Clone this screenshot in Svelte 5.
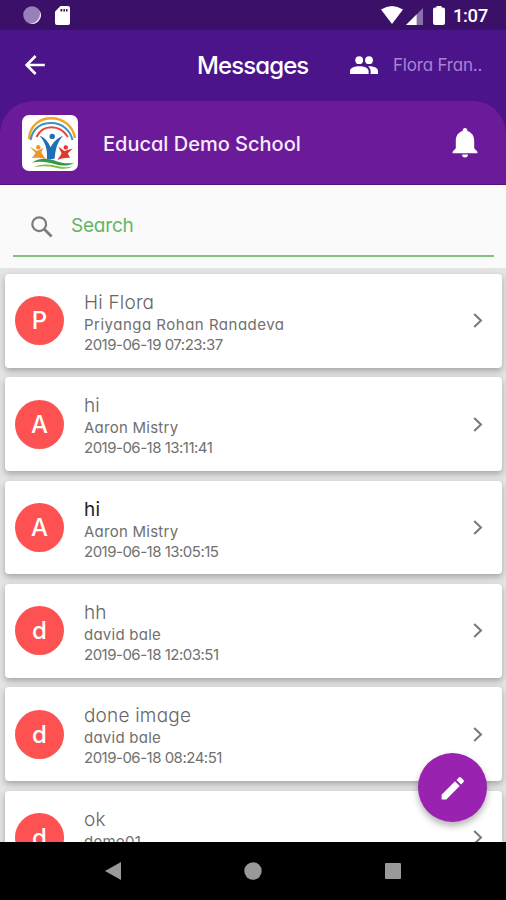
<script>
  const messages = [
    { initial: 'P', title: 'Hi Flora', sender: 'Priyanga Rohan Ranadeva', stamp: '2019-06-19 07:23:37' },
    { initial: 'A', title: 'hi', sender: 'Aaron Mistry', stamp: '2019-06-18 13:11:41' },
    { initial: 'A', title: 'hi', sender: 'Aaron Mistry', stamp: '2019-06-18 13:05:15', unread: true },
    { initial: 'd', title: 'hh', sender: 'david bale', stamp: '2019-06-18 12:03:51' },
    { initial: 'd', title: 'done image', sender: 'david bale', stamp: '2019-06-18 08:24:51' },
    { initial: 'd', title: 'ok', sender: 'demo01', stamp: '' }
  ];
</script>

<div class="screen">
  <div class="status">
    <svg class="dot" width="18" height="18" viewBox="0 0 18 18">
      <circle cx="9" cy="9" r="8.8" fill="#9a7fb8" />
      <path d="M16.2 4.2A8.6 8.6 0 0 1 6 17.2 9.5 9.5 0 0 0 16.2 4.2Z" fill="#eee6f6" />
    </svg>
    <svg class="sd" width="15" height="19" viewBox="0 0 15 19">
      <path d="M5.5 0H13q2 0 2 2v15q0 2-2 2H2q-2 0-2-2V5.5Z" fill="#fff" />
      <path d="M5.5 3h1.8v2.5H5.5zM8.4 3H10v2.5H8.4zM11 3h1.5v2.5H11z" fill="#3b1068" />
    </svg>
    <span class="grow"></span>
    <svg width="22" height="18" viewBox="0 0 22 18">
      <path d="M0 3.6Q11-3.4 22 3.6L11 18Z" fill="#fff" />
    </svg>
    <svg class="cell" width="17" height="17" viewBox="0 0 17 17">
      <path d="M0 17 17 0V17Z" fill="#8a70aa" />
      <path d="M0 17 10.6 6.4V17Z" fill="#fff" />
    </svg>
    <svg class="battery" width="12" height="19" viewBox="0 0 12 19">
      <path d="M3.5 0h5v1.5H10q2 0 2 2V17q0 2-2 2H2q-2 0-2-2V3.5q0-2 2-2h1.5Z" fill="#fff" />
    </svg>
    <span class="clock">1:07</span>
  </div>

  <header>
    <svg class="back" width="20" height="20" viewBox="0 0 20 20" fill="none" stroke="#fff" stroke-width="2.6">
      <path d="M19.8 10H2M10.6 1 1.7 10l8.9 9" />
    </svg>
    <h1>Messages</h1>
    <svg class="people" width="28" height="18" viewBox="0 0 28 18" fill="#fff">
      <circle cx="9.2" cy="4.2" r="3.9" />
      <circle cx="19" cy="4.2" r="3.9" />
      <path d="M0 18v-3.2c0-3.2 5.6-4.6 9.4-4.6s9.2 1.4 9.2 4.6V18ZM20.6 18v-3.2c0-1.9-1-3.3-2.4-4.4 4.2-.3 9.8 1.2 9.8 4.4V18Z" />
    </svg>
    <span class="user">Flora Fran..</span>
  </header>

  <div class="banner-wrap">
    <div class="banner">
      <svg class="logo" width="56" height="56" viewBox="0 0 56 56">
        <rect width="56" height="56" rx="7" fill="#fff" />
        <g fill="none" stroke-width="2">
          <path d="M7 24C8 10 18 3.2 29.5 3.2S51 11 53 23" stroke="#efa52d" stroke-width="2.5" />
          <path d="M8.5 25C11 13 19 8 29.5 8S48 15 50.5 25" stroke="#3c91c5" />
          <path d="M14.5 22C18 14.5 23 12.3 29.5 12.3S42 16 46 22" stroke="#e5493b" />
        </g>
        <g fill="#1d70b5">
          <circle cx="30.2" cy="21.4" r="2.7" />
          <path d="M17.5 20.8c5.2 1.8 9.2 6.5 11.1 11.5C30.8 28 35 22.8 41 21c-5.2 5.3-7.5 12-8.3 22.5-3 1-6 1-7.8.2.8-9.2-1.8-17-7.4-22.9Z" />
        </g>
        <g fill="#f09525">
          <circle cx="16.3" cy="32.3" r="2.2" />
          <path d="M7.5 31.5l7.4 4.5 6.4-3-2 4.5 4.5 6.7c-5-1.2-9.3-1.8-14-1l3.8-5.2Z" />
        </g>
        <g fill="#df3831">
          <circle cx="43.8" cy="32.4" r="2.2" />
          <path d="M36.3 31.5l6 4.5 8.7-2.5-5.2 4.8 2.2 4.4c-4.6-.2-8.6.7-12.6 2.2l4.2-6.5Z" />
        </g>
        <path d="M10.2 47.8c9-6.2 17-3.8 25-1.4 6 1.8 11 2.4 16.7 1.5-6 3.8-12.5 2.8-19.4 1-7.7-2-14-3.2-22.3-1.1Z" fill="#31994a" />
        <path d="M12 52c9-4.2 18-2.4 24.4-.7 5.3 1.4 9.5 1 14.3.2-6 3.3-12.2 2.2-18 .9-6.4-1.5-13-1.7-20.7-.4Z" fill="#83bd42" />
      </svg>
      <span class="school">Educal Demo School</span>
      <svg class="bell" width="26" height="30" viewBox="0 0 26 30" fill="#fff">
        <path d="M13 0c1.5 0 2.3 1 2.3 2.3v.8c4.6 1.3 6.9 5 6.9 9.7v7.4l3.2 3.5v1.5H.6v-1.5l3.2-3.5v-7.4c0-4.7 2.3-8.4 6.9-9.7v-.8C10.7 1 11.5 0 13 0ZM10 26.4h6c0 1.8-1.3 3-3 3s-3-1.2-3-3Z" />
      </svg>
    </div>
  </div>

  <div class="search">
    <div class="field">
      <svg width="22" height="22" viewBox="0 0 22 22" fill="none" stroke="#7d7d7d">
        <circle cx="8.2" cy="8.2" r="6.9" stroke-width="2.2" />
        <path d="m13.3 13.3 7.3 7.3" stroke-width="2.8" />
      </svg>
      <span>Search</span>
    </div>
  </div>

  <main>
    {#each messages as m}
      <article>
        <div class="avatar">{m.initial}</div>
        <div class="body">
          <div class="title" class:unread={m.unread}>{m.title}</div>
          <div class="sender" class:wide={m.sender.length > 20}>{m.sender}</div>
          <div class="stamp">{m.stamp}</div>
        </div>
        <svg class="chev" width="10" height="15" viewBox="0 0 10 15" fill="none" stroke="#777" stroke-width="2">
          <path d="m1.2 1 6.8 6.5L1.2 14" />
        </svg>
      </article>
    {/each}
    <button class="fab" aria-label="Compose">
      <svg width="24" height="24" viewBox="0 0 24 24" fill="#fff">
        <path d="M.6 18.7 14 5.3l4.7 4.7L5.300 23.400H.6ZM15.500 3.900 17.900 1.500q1-1 2 0l2.600 2.600q1 1 0 2L20.100 8.500Z" />
      </svg>
    </button>
  </main>

  <nav>
    <svg width="16" height="18" viewBox="0 0 16 18"><path d="M16 0v18L0 9Z" fill="#999" /></svg>
    <svg width="18" height="18" viewBox="0 0 18 18"><circle cx="9" cy="9" r="8.7" fill="#999" /></svg>
    <svg width="16" height="16" viewBox="0 0 16 16"><rect width="16" height="16" rx="1" fill="#999" /></svg>
  </nav>
</div>

<style>
  .screen {
    width: 506px;
    height: 900px;
    overflow: hidden;
    display: flex;
    flex-direction: column;
    font-family: Inter, Lato, sans-serif;
    font-feature-settings: 'cv11';
    background: #fafafa;
    white-space: nowrap;
  }
  svg { display: block; flex: none; }
  .status {
    height: 30px;
    flex: none;
    box-sizing: border-box;
    padding: 0 18px 0 23px;
    display: flex;
    align-items: center;
    background: #3b1068;
  }
  .sd { margin-left: 14px; }
  .grow { flex: 1; }
  .cell { margin: 2px 0 0 3px; }
  .battery { margin-left: 10px; }
  .clock {
    width: 35px;
    margin: 2px 0 0 8px;
    color: #fff;
    font: 500 18.5px Roboto, sans-serif;
    letter-spacing: -0.4px;
  }
  header {
    height: 71px;
    flex: none;
    display: flex;
    align-items: center;
    background: #4b148b;
    color: #fff;
    padding-bottom: 2px;
    box-sizing: border-box;
  }
  .back { margin-left: 25px; }
  h1 {
    width: 112px;
    margin: 2px 0 0 152px;
    font-size: 24px;
    line-height: 30px;
    font-weight: 500;
    letter-spacing: -0.9px;
  }
  .people { margin-left: 41px; }
  .user {
    margin-left: 15px;
    color: #a983d0;
    font-size: 17px;
    letter-spacing: -0.2px;
  }
  .banner-wrap { background: #4b148b; flex: none; }
  .banner {
    height: 84px;
    box-sizing: border-box;
    display: flex;
    align-items: center;
    padding: 1px 28px 0 22px;
    border-radius: 33px 33px 0 0;
    background: #6b1b99;
    border-bottom: 1px solid #54107f;
  }
  .school {
    flex: 1;
    margin: 2px 0 0 25px;
    font-size: 20px;
    font-weight: 500;
    color: #f5ecfb;
  }
  .search {
    height: 83px;
    flex: none;
    box-sizing: border-box;
    padding: 0 12px 0 13px;
    background: #fafafa;
  }
  .field {
    height: 72px;
    box-sizing: border-box;
    display: flex;
    align-items: center;
    padding: 13px 0 0 18px;
    border-bottom: 2px solid #7cc47f;
  }
  .field span {
    margin: -3px 0 0 18px;
    font-size: 19px;
    color: #62b566;
    letter-spacing: -0.2px;
  }
  main {
    position: relative;
    flex: 1;
    min-height: 0;
    overflow: hidden;
    box-sizing: border-box;
    display: flex;
    flex-direction: column;
    gap: 9.5px;
    padding: 5.8px 4.5px 0 5.4px;
    background: #e4e4e4;
  }
  article {
    height: 93.9px;
    flex: none;
    box-sizing: border-box;
    display: flex;
    align-items: center;
    padding: 0 19px 0 9.6px;
    border-radius: 4px;
    background: #fff;
    box-shadow: 0 3px 6px rgba(0, 0, 0, 0.28);
  }
  .avatar {
    width: 49px;
    height: 49px;
    border-radius: 50%;
    background: #fe5151;
    color: #fff;
    font-size: 24px;
    font-weight: 500;
    line-height: 50px;
    text-align: center;
  }
  .body { flex: 1; margin: 4px 0 0 20px; color: #707070; }
  .title { font-size: 19px; font-weight: 300; line-height: 24px; color: #666; letter-spacing: 0.2px; }
  .unread { font-weight: 400; color: #222; }
  .sender { font-size: 15px; line-height: 20px; letter-spacing: 0.25px; }
  .wide { letter-spacing: 0.5px; }
  .stamp { height: 20px; font-size: 15px; line-height: 20px; letter-spacing: -0.5px; }
  .fab {
    position: absolute;
    right: 19px;
    bottom: 20px;
    width: 69px;
    height: 69px;
    padding: 0;
    border: 0;
    border-radius: 50%;
    display: flex;
    align-items: center;
    justify-content: center;
    background: #9a22b0;
    box-shadow: 0 4px 7px rgba(0, 0, 0, 0.3);
  }
  nav {
    height: 58px;
    flex: none;
    box-sizing: border-box;
    padding: 0 105px;
    display: flex;
    align-items: center;
    justify-content: space-between;
    background: #000;
  }
</style>
